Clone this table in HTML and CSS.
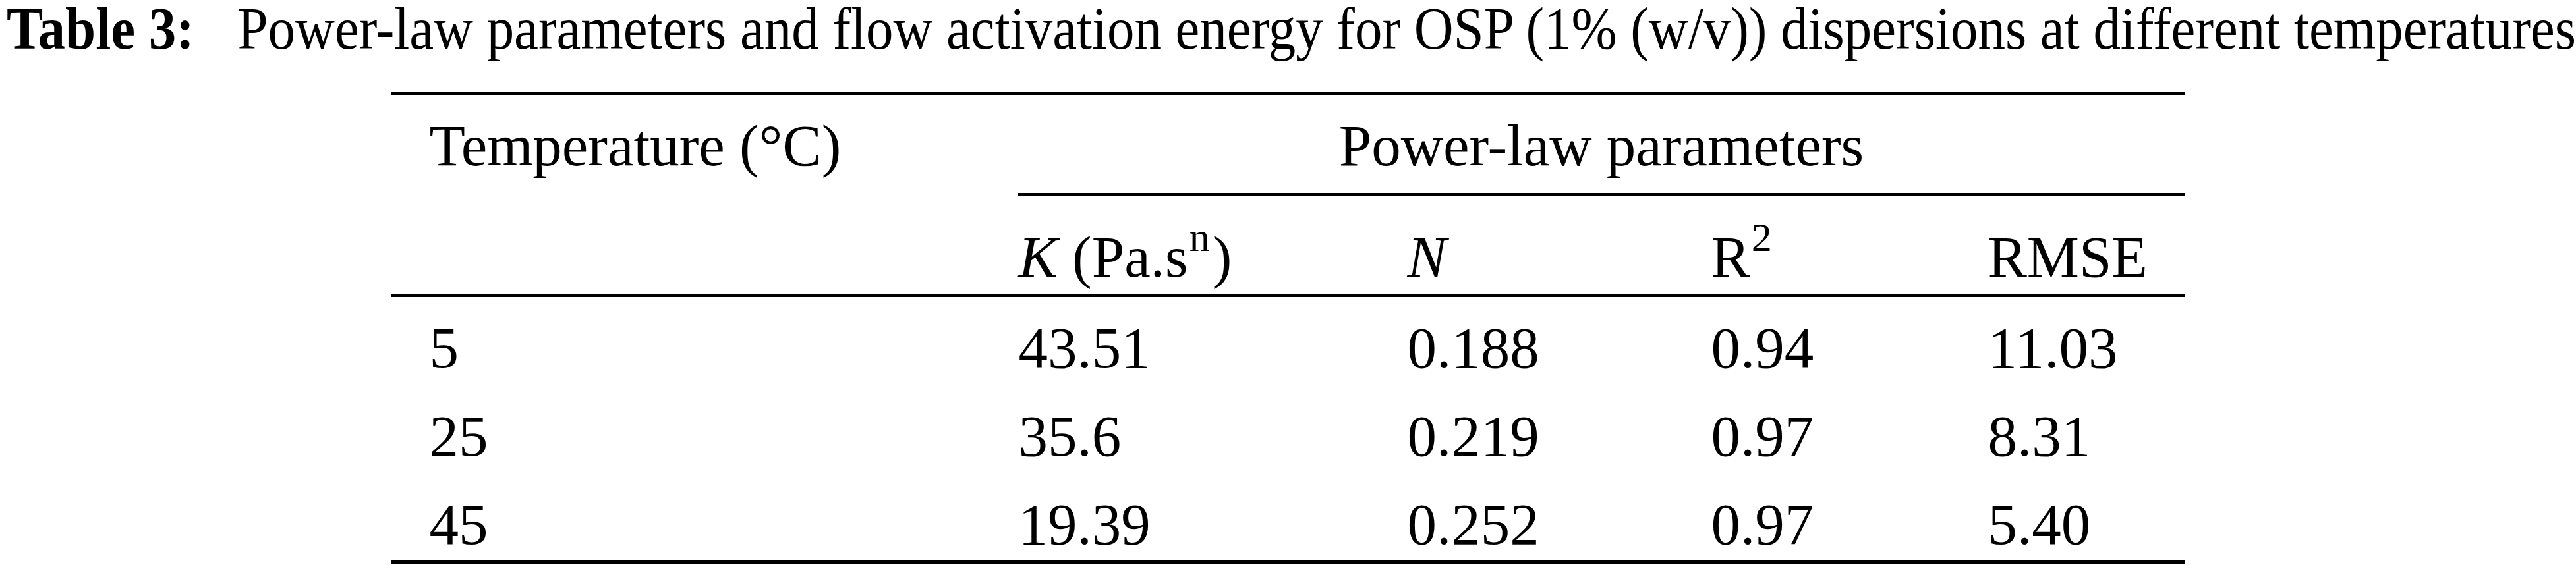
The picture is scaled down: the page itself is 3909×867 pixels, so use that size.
FILE: index.html
```html
<!DOCTYPE html>
<html lang="en">
<head>
<meta charset="utf-8">
<title>Table 3</title>
<link rel="stylesheet" href="styles.css">
</head>
<body>
<div class="caption"><span class="label">Table 3:</span> Power-law parameters and flow activation energy for OSP (1% (w/v)) dispersions at different temperatures</div>
<table class="data">
  <colgroup>
    <col class="c1"><col class="c2"><col class="c3"><col class="c4"><col class="c5">
  </colgroup>
  <thead>
    <tr class="head1">
      <th class="first blank-rule">Temperature (°C)</th>
      <th class="group" colspan="4">Power-law parameters</th>
    </tr>
    <tr class="head2">
      <th class="first"></th>
      <th><i>K</i> (Pa.s<sup>n</sup>)</th>
      <th><i>N</i></th>
      <th>R<sup>2</sup></th>
      <th>RMSE</th>
    </tr>
  </thead>
  <tbody>
    <tr>
      <td class="first">5</td><td>43.51</td><td>0.188</td><td>0.94</td><td>11.03</td>
    </tr>
    <tr>
      <td class="first">25</td><td>35.6</td><td>0.219</td><td>0.97</td><td>8.31</td>
    </tr>
    <tr class="last">
      <td class="first">45</td><td>19.39</td><td>0.252</td><td>0.97</td><td>5.40</td>
    </tr>
  </tbody>
</table>
</body>
</html>
```

FILE: styles.css
```css
html, body {
  margin: 0;
  padding: 0;
  background: #ffffff;
  color: #000000;
}

body {
  font-family: "Liberation Serif", "Times New Roman", serif;
}

.caption {
  padding-left: 11px;
  font-size: 92px;
  line-height: 86px;
  white-space: nowrap;
  transform: scaleX(0.901);
  transform-origin: left top;
}

.caption .label {
  font-weight: bold;
  margin-right: 50px;
}

.data {
  margin: 54px auto 0;
  width: 2720px;
  table-layout: fixed;
  border-collapse: separate;
  border-spacing: 0;
  border-top: 5px solid #000;
  border-bottom: 5px solid #000;
  font-size: 89px;
  line-height: 89px;
}

.c1 { width: 951px; }
.c2 { width: 590px; }
.c3 { width: 461px; }
.c4 { width: 420px; }
.c5 { width: 298px; }

.data th,
.data td {
  font-weight: normal;
  text-align: left;
  padding: 0;
  vertical-align: baseline;
  white-space: nowrap;
}

.data .first {
  padding-left: 57px;
}

.head1 th {
  padding-top: 32px;
  padding-bottom: 27px;
  border-bottom: 5px solid #000;
}

.head1 th.blank-rule {
  border-bottom-color: transparent;
}

.head1 th.group {
  text-align: center;
}

.head2 th {
  padding-top: 48px;
  padding-bottom: 11px;
  border-bottom: 5px solid #000;
}

.data tbody td {
  padding-top: 33px;
  padding-bottom: 12px;
}

.data tbody tr.last td {
  padding-bottom: 10px;
}

.data sup {
  font-size: 0.7em;
  line-height: 0;
  vertical-align: 39px;
  margin-left: 2px;
  margin-right: 4px;
}
```
